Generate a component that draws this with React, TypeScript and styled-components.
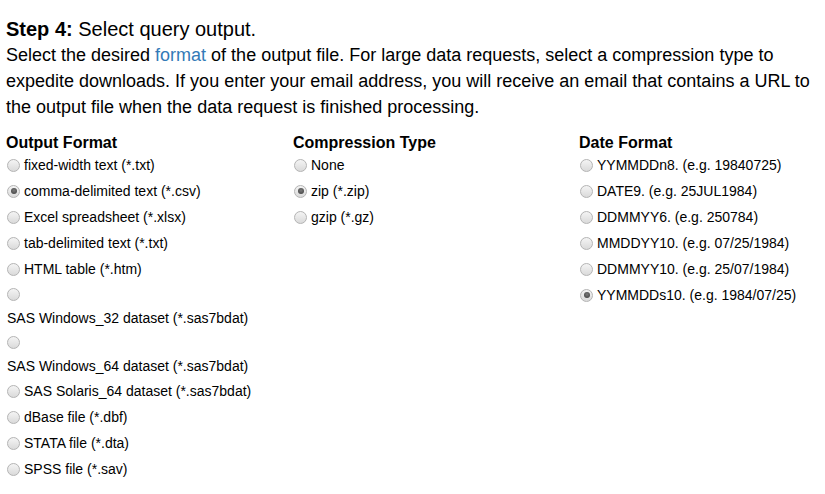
import React from "react";
import styled, { createGlobalStyle } from "styled-components";

const GlobalStyle = createGlobalStyle`
  html, body { margin: 0; padding: 0; background: #fff; }
  body { font-family: "Liberation Sans", Arial, sans-serif; color: #000; }
`;

const Page = styled.div`
  padding: 17px 0 0 6px;
  overflow: hidden;
`;

const Heading = styled.div`
  font-size: 20px;
  line-height: 25px;
`;

const Intro = styled.p`
  margin: 0;
  font-size: 18px;
  line-height: 26px;
`;

const Link = styled.a`
  color: #337ab7;
  text-decoration: none;
`;

const Columns = styled.div`
  display: grid;
  grid-template-columns: 287px 286px 1fr;
  margin-top: 13px;
`;

const Column = styled.div`
  display: flex;
  flex-direction: column;
`;

const ColumnTitle = styled.div`
  font-size: 16px;
  font-weight: bold;
  line-height: 19px;
`;

const Option = styled.label<{ $stacked?: boolean }>`
  display: flex;
  flex-direction: ${(p) => (p.$stacked ? "column" : "row")};
  align-items: ${(p) => (p.$stacked ? "flex-start" : "center")};
  height: ${(p) => (p.$stacked ? "48px" : "26px")};
  font-size: 14px;
  white-space: nowrap;
`;

const RadioLine = styled.span<{ $stacked?: boolean }>`
  display: flex;
  align-items: center;
  height: ${(p) => (p.$stacked ? "24px" : "auto")};
`;

const TextLine = styled.span<{ $stacked?: boolean }>`
  display: flex;
  align-items: center;
  height: ${(p) => (p.$stacked ? "24px" : "auto")};
  margin-left: ${(p) => (p.$stacked ? "1px" : "4px")};
`;

const Radio = styled.input.attrs({ type: "radio" })`
  appearance: none;
  -webkit-appearance: none;
  margin: 0 0 0 1px;
  width: 13px;
  height: 13px;
  border-radius: 50%;
  border: 1px solid #b4b4b4;
  box-sizing: border-box;
  background: linear-gradient(#f4f4f4, #dadada);
  position: relative;
  flex: none;
  &:checked::after {
    content: "";
    position: absolute;
    left: 2.5px;
    top: 2.5px;
    width: 6px;
    height: 6px;
    border-radius: 50%;
    background: radial-gradient(circle at 50% 40%, #7a7a7a, #3a3a3a);
  }
`;

type Opt = { label: string; checked?: boolean; stacked?: boolean };

const outputFormats: Opt[] = [
  { label: "fixed-width text (*.txt)" },
  { label: "comma-delimited text (*.csv)", checked: true },
  { label: "Excel spreadsheet (*.xlsx)" },
  { label: "tab-delimited text (*.txt)" },
  { label: "HTML table (*.htm)" },
  { label: "SAS Windows_32 dataset (*.sas7bdat)", stacked: true },
  { label: "SAS Windows_64 dataset (*.sas7bdat)", stacked: true },
  { label: "SAS Solaris_64 dataset (*.sas7bdat)" },
  { label: "dBase file (*.dbf)" },
  { label: "STATA file (*.dta)" },
  { label: "SPSS file (*.sav)" },
];

const compressions: Opt[] = [
  { label: "None" },
  { label: "zip (*.zip)", checked: true },
  { label: "gzip (*.gz)" },
];

const dateFormats: Opt[] = [
  { label: "YYMMDDn8. (e.g. 19840725)" },
  { label: "DATE9. (e.g. 25JUL1984)" },
  { label: "DDMMYY6. (e.g. 250784)" },
  { label: "MMDDYY10. (e.g. 07/25/1984)" },
  { label: "DDMMYY10. (e.g. 25/07/1984)" },
  { label: "YYMMDDs10. (e.g. 1984/07/25)", checked: true },
];

function Group({ title, name, options }: { title: string; name: string; options: Opt[] }) {
  return (
    <Column>
      <ColumnTitle>{title}</ColumnTitle>
      {options.map((o) => (
        <Option key={o.label} $stacked={o.stacked}>
          <RadioLine $stacked={o.stacked}>
            <Radio name={name} defaultChecked={o.checked} />
          </RadioLine>
          <TextLine $stacked={o.stacked}>{o.label}</TextLine>
        </Option>
      ))}
    </Column>
  );
}

export default function App() {
  return (
    <>
      <GlobalStyle />
      <Page>
        <Heading>
          <b>Step 4:</b> Select query output.
        </Heading>
        <Intro>
          Select the desired <Link href="#">format</Link> of the output file. For large data
          requests, select a compression type to expedite downloads. If you enter your email
          address, you will receive an email that contains a URL to the output file when the
          data request is finished processing.
        </Intro>
        <Columns>
          <Group title="Output Format" name="format" options={outputFormats} />
          <Group title="Compression Type" name="compression" options={compressions} />
          <Group title="Date Format" name="date" options={dateFormats} />
        </Columns>
      </Page>
    </>
  );
}
